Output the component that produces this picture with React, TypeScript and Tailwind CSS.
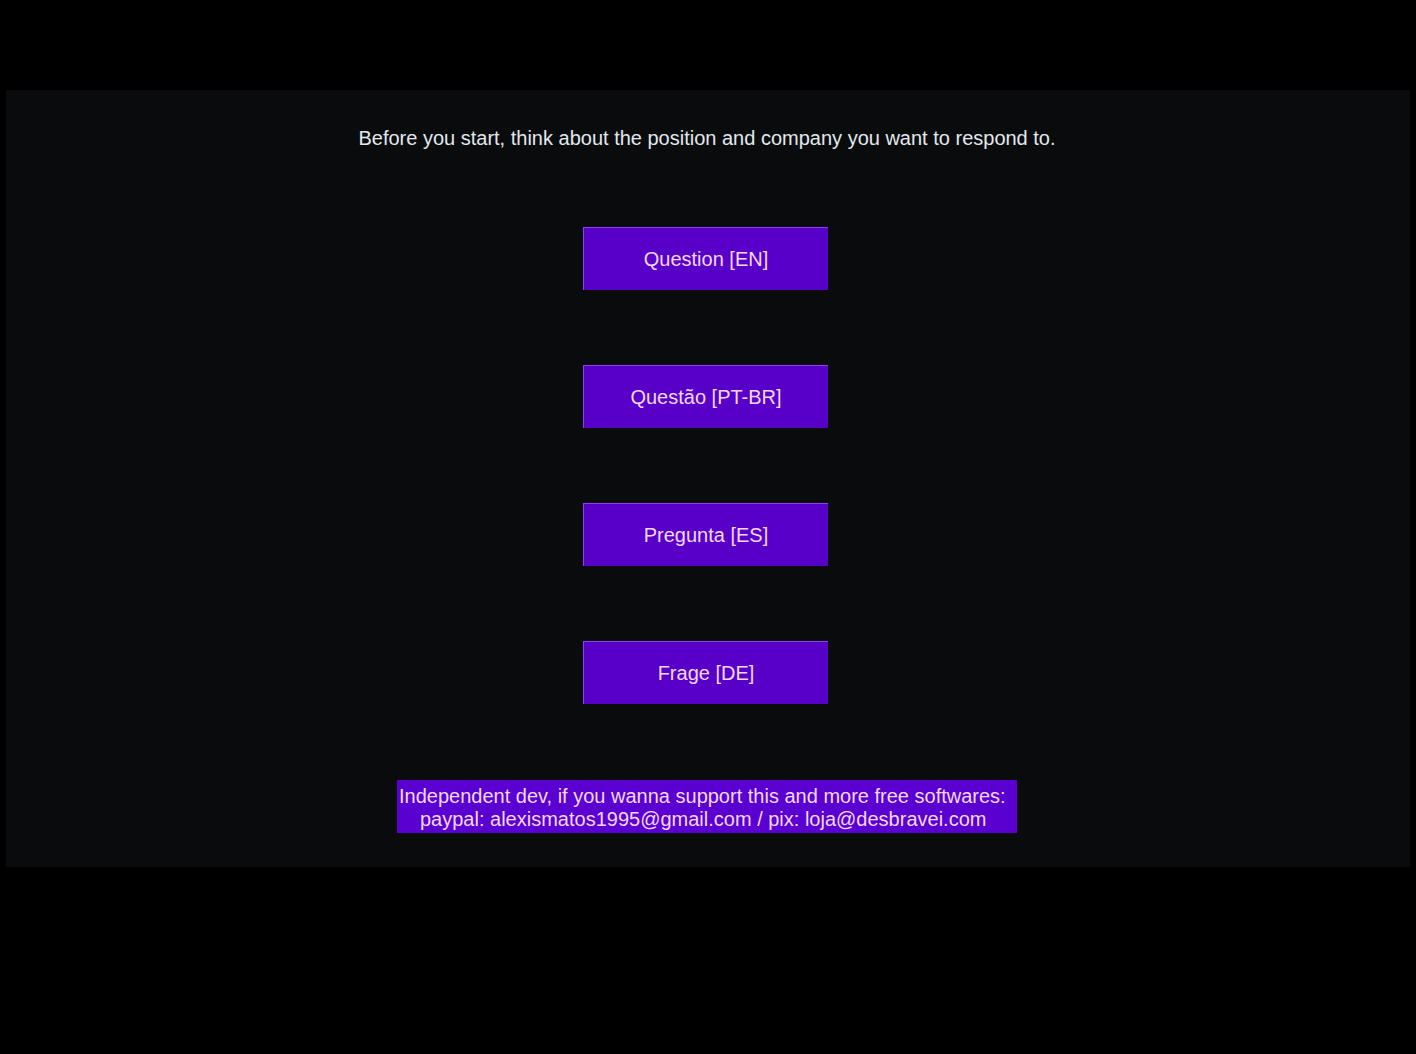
export default function App() {
  const langs = ["Question [EN]", "Questão [PT-BR]", "Pregunta [ES]", "Frage [DE]"];
  return (
    <div
      className="min-h-[1054px] w-full bg-black pt-[90px] px-[6px]"
      style={{ fontFamily: '"Liberation Sans", Arial, sans-serif' }}
    >
      <main className="flex h-[777px] flex-col items-center bg-[#0a0b0d] pt-[36px]">
        <p className="mr-[2px] text-[20px] leading-6 text-[#e2e8ee]">
          Before you start, think about the position and company you want to respond to.
        </p>
        <div className="mt-[77px] mr-[5px] flex flex-col items-center gap-[75px]">
          {langs.map((l) => (
            <button
              key={l}
              className="h-[63px] w-[245px] border-t border-l border-[#8a40f0] bg-[#5800c8] text-[20px] text-[#f2d8ff]"
            >
              {l}
            </button>
          ))}
        </div>
        {/* support note */}
        <div className="mt-[76px] mr-[2px] flex h-[53px] w-[620px] flex-col items-start justify-center bg-[#5a00d0] pl-[2px] pt-[2px] text-[20px] leading-[23px] text-[#f2d8ff]">
          <span>Independent dev, if you wanna support this and more free softwares:</span>
          <span className="pl-[21px]">paypal: alexismatos1995@gmail.com / pix: loja@desbravei.com</span>
        </div>
      </main>
    </div>
  );
}
